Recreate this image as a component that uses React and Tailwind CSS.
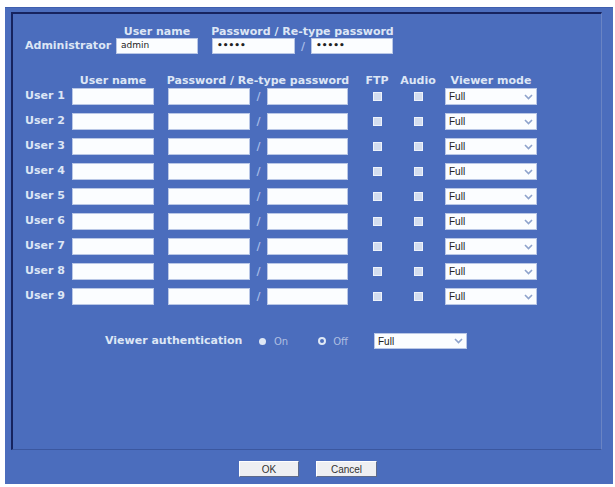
const users = [1, 2, 3, 4, 5, 6, 7, 8, 9];

const font = { fontFamily: '"DejaVu Sans", Verdana, sans-serif' };

function TextBox({ w = "w-[82px]", h = "h-[17px]", value, bold }) {
  return (
    <div
      className={`${w} ${h} flex items-center border border-[#b9c7e6] bg-[#fbfdff] pl-[4px] text-[9px] text-[#222] ${
        bold ? "font-bold" : "font-normal"
      }`}
    >
      {value}
    </div>
  );
}

function Check() {
  return <div className="h-[9px] w-[9px] border border-[#eef3fb] bg-[#d3ddef]" />;
}

function Chevron() {
  return (
    <svg width="9" height="6" viewBox="0 0 9 6" className="text-[#8ea3cc]">
      <path d="M1 1l3.5 3.5L8 1" fill="none" stroke="currentColor" strokeWidth="1.6" />
    </svg>
  );
}

function ModeSelect({ w = "w-[92px]", h = "h-[17px]" }) {
  return (
    <div
      className={`${w} ${h} flex items-center justify-between border border-[#b9c7e6] bg-[#fbfdff] pl-[3px] pr-[3px]`}
    >
      <span
        className="text-[10px] font-normal text-[#222]"
        style={{ fontFamily: '"Liberation Sans", Arial, sans-serif' }}
      >
        Full
      </span>
      <Chevron />
    </div>
  );
}

function Slash({ w }) {
  return <div className={`${w} text-center text-[11px] leading-none text-[#a6bbe6]`}>/</div>;
}

function Btn({ label, w }) {
  return (
    <div
      className={`${w} flex h-[16px] items-center justify-center border border-t-[#ffffff] border-l-[#ffffff] border-r-[#5d6a8a] border-b-[#5d6a8a] bg-[#eeeff2] text-[10px] text-[#333]`}
      style={{ fontFamily: '"Liberation Sans", Arial, sans-serif' }}
    >
      {label}
    </div>
  );
}

export default function App() {
  return (
    <div className="h-[487px] w-[615px] bg-white pl-[5px] pt-[7px]" style={font}>
      <div className="h-[477px] w-[608px] border-t border-[#3f5fae] bg-[#4b6dbd] px-[6px] pt-[4px]">
        {/* settings panel */}
        <div className="h-[438px] w-[591px] border-b border-l-2 border-r border-t-2 border-b-[#3b579f] border-l-[#16235f] border-r-[#6a84c4] border-t-[#16235f] text-[11px] font-bold text-[#dde6f5]">
          {/* administrator */}
          <div className="mt-[11px] flex h-[13px] items-center leading-[13px]">
            <div className="w-[103px]" />
            <div className="flex w-[82px] justify-center whitespace-nowrap">User name</div>
            <div className="w-[14px]" />
            <div className="flex w-[181px] justify-center whitespace-nowrap">
              Password / Re-type password
            </div>
          </div>
          <div className="flex h-[16px] items-center">
            <div className="w-[103px] pl-[12px]">Administrator</div>
            <TextBox h="h-[16px]" value="admin" />
            <div className="w-[14px]" />
            <TextBox w="w-[83px]" h="h-[16px]" value="•••••" bold />
            <Slash w="w-[16px]" />
            <TextBox h="h-[16px]" value="•••••" bold />
          </div>

          {/* users table */}
          <div className="mt-[20px] flex h-[13px] items-center whitespace-nowrap leading-[13px]">
            <div className="w-[59px]" />
            <div className="flex w-[82px] justify-center">User name</div>
            <div className="w-[14px]" />
            <div className="flex w-[180px] justify-center">Password / Re-type password</div>
            <div className="flex w-[58px] justify-center">FTP</div>
            <div className="flex w-[24px] justify-center">Audio</div>
            <div className="w-[15px]" />
            <div className="flex w-[92px] justify-center">Viewer mode</div>
          </div>
          <div className="mt-[1px] flex flex-col gap-[8px]">
            {users.map((n) => (
              <div key={n} className="flex h-[17px] items-center">
                <div className="w-[59px] pl-[12px] whitespace-nowrap">User {n}</div>
                <TextBox />
                <div className="w-[14px]" />
                <TextBox />
                <Slash w="w-[17px]" />
                <TextBox w="w-[81px]" />
                <div className="flex w-[58px] justify-center">
                  <Check />
                </div>
                <div className="flex w-[24px] justify-center">
                  <Check />
                </div>
                <div className="w-[15px]" />
                <ModeSelect />
              </div>
            ))}
          </div>

          {/* viewer authentication */}
          <div className="mt-[28px] flex h-[16px] items-center">
            <div className="w-[229px] pl-[92px] whitespace-nowrap">Viewer authentication</div>
            <div className="ml-[17px] h-[7px] w-[7px] rounded-full bg-[#dfe8f5]" />
            <div className="ml-[8px] text-[10px] font-normal text-[#aebee2]">On</div>
            <div className="ml-[30px] h-[8px] w-[8px] rounded-full border-2 border-[#dfe8f5]" />
            <div className="ml-[7px] text-[10px] font-normal text-[#aebee2]">Off</div>
            <div className="ml-[26px]">
              <ModeSelect w="w-[93px]" h="h-[16px]" />
            </div>
          </div>
        </div>

        {/* buttons */}
        <div className="mt-[11px] flex justify-center gap-[17px] pr-[2px]">
          <Btn label="OK" w="w-[60px]" />
          <Btn label="Cancel" w="w-[61px]" />
        </div>
      </div>
    </div>
  );
}
